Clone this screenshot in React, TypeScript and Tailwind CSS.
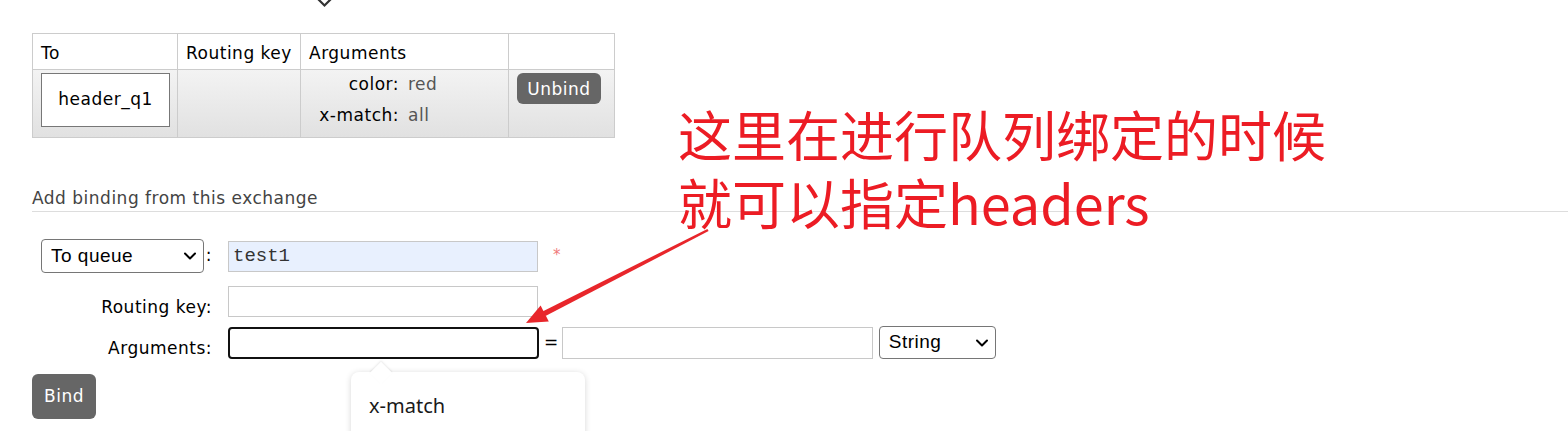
import { ChevronDown } from 'lucide-react'

const bindings = [{ queue: 'header_q1', args: [['color', 'red'], ['x-match', 'all']] }]

function FakeSelect({ value, className = '' }: { value: string; className?: string }) {
  return (
    <div className={`relative ${className}`}>
      <select
        defaultValue={value}
        className="h-full w-full appearance-none rounded-[4px] border border-[#767676] bg-white pl-[9px] font-['Liberation_Sans',sans-serif] text-[19px] text-black outline-none"
      >
        <option>{value}</option>
      </select>
      <ChevronDown
        size={20}
        strokeWidth={2.4}
        className="pointer-events-none absolute right-[4px] top-1/2 -translate-y-1/2 text-black"
      />
    </div>
  )
}

export default function App() {
  return (
    <div className="relative h-[431px] w-[1568px] overflow-hidden bg-white font-['DejaVu_Sans',sans-serif] text-[17px] tracking-[0.5px] text-black">
      <div className="h-[33px]" />

      {/* bindings table */}
      <div className="ml-[32px] grid w-[583px] grid-cols-[145px_123px_208px_106px] border-l border-t border-[#cccccc]">
        {['To', 'Routing key', 'Arguments', ''].map((h) => (
          <div key={h} className="h-[36px] border-b border-r border-[#cccccc] px-2 pt-[9px] leading-[20px]">
            {h}
          </div>
        ))}
        {bindings.map((b) => (
          <div key={b.queue} className="contents">
            <div className="h-[68px] border-b border-r border-[#cccccc] bg-linear-to-b from-[#f3f3f3] to-[#e1e1e1] pl-2 pt-[3px]">
              <div className="flex h-[54px] w-[129px] items-center justify-center border border-[#777777] bg-white">
                {b.queue}
              </div>
            </div>
            <div className="h-[68px] border-b border-r border-[#cccccc] bg-linear-to-b from-[#f3f3f3] to-[#e1e1e1]" />
            <div className="h-[68px] border-b border-r border-[#cccccc] bg-linear-to-b from-[#f3f3f3] to-[#e1e1e1] pl-2">
              <div className="grid grid-cols-[90px_auto] gap-x-[9px] gap-y-[4px] pt-[1px] leading-[27px]">
                {b.args.map(([k, v]) => (
                  <div key={k} className="contents">
                    <span className="text-right">{k}:</span>
                    <span className="text-[#555555]">{v}</span>
                  </div>
                ))}
              </div>
            </div>
            <div className="h-[68px] border-b border-r border-[#cccccc] bg-linear-to-b from-[#f3f3f3] to-[#e1e1e1] pl-2 pt-[3px]">
              <button className="h-[31px] w-[84px] rounded-[6px] bg-[#666666] pt-[2px] text-white">Unbind</button>
            </div>
          </div>
        ))}
      </div>

      {/* add binding */}
      <div className="ml-[32px] mt-[50px] border-b border-[#dddddd] pb-[3px] leading-[20px] text-[#444444]">
        Add binding from this exchange
      </div>

      <div className="ml-[41px] mt-[27px] grid grid-cols-[171px_1fr] gap-x-[16px]">
        <div className="flex h-[34px] items-center">
          <FakeSelect value="To queue" className="h-[34px] w-[164px]" />
          <span className="ml-[2px]">:</span>
        </div>
        <div className="flex h-[34px] items-center">
          <input
            readOnly
            defaultValue="test1"
            className="h-[31px] w-[310px] border border-[#c8c8c8] bg-[#e8f0fe] px-[4px] font-['Liberation_Mono',monospace] text-[19px] tracking-normal text-[#333333] outline-none"
          />
          <span className="ml-[15px] self-start pt-[5px] text-[15px] text-[#f07a7a]">*</span>
        </div>

        <div className="mt-[13px] pt-[11px] text-right leading-[20px]">Routing key:</div>
        <div className="mt-[13px]">
          <input readOnly className="h-[31px] w-[310px] border border-[#c8c8c8] bg-white outline-none" />
        </div>

        <div className="mt-[9px] pt-[12px] text-right leading-[20px]">Arguments:</div>
        <div className="mt-[9px] flex items-center">
          <input readOnly className="h-[32px] w-[311px] rounded-[4px] border-2 border-[#111111] bg-white outline-none" />
          <span className="ml-[5px] mr-[3px]">=</span>
          <input readOnly className="h-[32px] w-[311px] border border-[#c8c8c8] bg-white outline-none" />
          <FakeSelect value="String" className="ml-[6px] h-[33px] w-[117px]" />
        </div>
      </div>

      <button className="ml-[32px] mt-[15px] h-[45px] w-[64px] rounded-[6px] bg-[#666666] text-white">Bind</button>

      {/* autocomplete popup */}
      <div className="absolute left-[351px] top-[372px] h-[80px] w-[234px] rounded-[8px] bg-white pl-[18px] pt-[22px] font-['Noto_Sans',sans-serif] text-[20px] leading-[24px] tracking-normal text-[#1a1a1a] shadow-[0_1px_6px_rgba(0,0,0,0.16)]">
        x-match
      </div>
      <div className="absolute left-[373px] top-[365px] h-[16px] w-[16px] rotate-45 bg-white shadow-[-1px_-1px_2px_rgba(0,0,0,0.08)]" />

      {/* annotation */}
      <div className="absolute left-[678px] top-[100px] font-['Noto_Sans_CJK_SC',sans-serif] text-[54px] leading-[68px] tracking-normal text-[#ec1c24]">
        <div>这里在进行队列绑定的时候</div>
        <div>就可以指定headers</div>
      </div>

      <svg className="pointer-events-none absolute inset-0" width="1568" height="431" viewBox="0 0 1568 431">
        <polyline points="318,-1 324.5,5.5 331,-1" fill="none" stroke="#333333" strokeWidth="2.2" />
        <polygon points="708.6,231.1 707.4,228.9 542.5,311.5 545.5,316" fill="#e8262b" />
        <polygon points="526,323 548.8,321.5 540.6,305.5" fill="#e8262b" />
      </svg>
    </div>
  )
}
